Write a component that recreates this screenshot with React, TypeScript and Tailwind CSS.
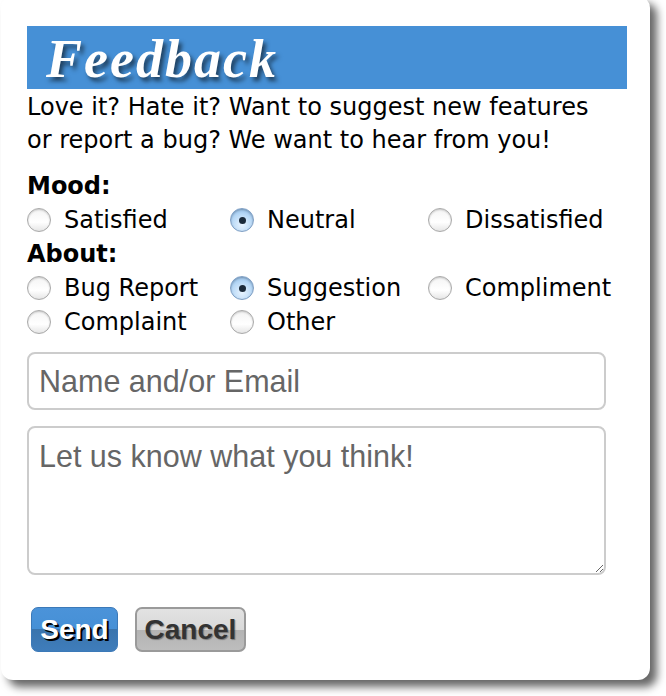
import React from 'react';

type Option = { label: string; checked?: boolean };

const moods: Option[] = [
  { label: 'Satisfied' },
  { label: 'Neutral', checked: true },
  { label: 'Dissatisfied' },
];

const topics: Option[] = [
  { label: 'Bug Report' },
  { label: 'Suggestion', checked: true },
  { label: 'Compliment' },
  { label: 'Complaint' },
  { label: 'Other' },
];

const Radio: React.FC<Option> = ({ label, checked }) => (
  <label className="flex items-center gap-[13px] h-[34px]">
    {checked ? (
      <span className="flex items-center justify-center w-[24px] h-[24px] rounded-full border border-[#7f9fc4] bg-[radial-gradient(circle_at_50%_70%,#e9f4ff_0%,#b7d8f6_55%,#86b4e2_100%)] shadow-[inset_0_1px_2px_rgba(0,0,0,0.25)]">
        <span className="w-[7px] h-[7px] rounded-full bg-[#1b2a3a]" />
      </span>
    ) : (
      <span className="w-[24px] h-[24px] rounded-full border border-[#a9a9a9] bg-[linear-gradient(#f4f4f4,#ffffff_60%,#e6e6e6)] shadow-[inset_0_1px_2px_rgba(0,0,0,0.2)]" />
    )}
    <span>{label}</span>
  </label>
);

const RadioGroup: React.FC<{ options: Option[] }> = ({ options }) => (
  <div className="grid grid-cols-[203px_198px_200px]">
    {options.map((o) => (
      <Radio key={o.label} {...o} />
    ))}
  </div>
);

export default function App() {
  return (
    <div className="w-[666px] h-[696px] bg-white overflow-hidden">
      <div className="ml-[1px] -mt-[4px] w-[649px] h-[684px] bg-white rounded-[12px] shadow-[7px_7px_8px_rgba(0,0,0,0.6)] pt-[30px] pl-[26px] text-black font-['DejaVu_Sans',sans-serif] text-[24px]">
        <div className="w-[600px] h-[63px] bg-[#4690d6] pl-[19px] flex items-center">
          <h1 className="text-white font-['Liberation_Serif',serif] font-bold italic text-[54px] tracking-[2px] leading-none mt-[2px] [text-shadow:3px_4px_4px_rgba(0,0,0,0.55)]">
            Feedback
          </h1>
        </div>
        <p className="w-[580px] leading-[33px] pt-[2px]">
          Love it? Hate it? Want to suggest new features or report a bug? We want to hear from you!
        </p>
        <div className="mt-[12px] leading-[34px] font-bold">Mood:</div>
        <RadioGroup options={moods} />
        <div className="leading-[34px] font-bold">About:</div>
        <RadioGroup options={topics} />
        <div className="mt-[13px] w-[579px] flex flex-col gap-[16px] font-['Liberation_Sans',Arial,sans-serif]">
          <input
            placeholder="Name and/or Email"
            className="h-[58px] border-2 border-[#cccccc] rounded-[8px] px-[10px] text-[30.5px] placeholder:text-[#666666] outline-none"
          />
          <textarea
            placeholder="Let us know what you think!"
            className="h-[149px] border-2 border-[#cccccc] rounded-[8px] px-[10px] pt-[10px] text-[30.5px] leading-[36px] placeholder:text-[#666666] outline-none resize-y"
          />
        </div>
        <div className="mt-[32px] ml-[4px] flex gap-[17px] font-['Liberation_Sans',Arial,sans-serif] font-bold text-[28px]">
          <button className="w-[87px] h-[45px] rounded-[7px] border border-[#3c79b8] bg-[linear-gradient(#4b93d9_0%,#4690d6_50%,#3a74ad_50%,#3f7dbb_100%)] text-white [text-shadow:2px_2px_0_#000] leading-none">
            Send
          </button>
          <button className="w-[111px] h-[45px] rounded-[7px] border-2 border-[#9a9a9a] bg-[linear-gradient(#e2e2e2_0%,#d9d9d9_50%,#b3b3b3_50%,#bdbdbd_100%)] text-[#333333] [text-shadow:1px_1px_1px_rgba(0,0,0,0.35)] leading-none">
            Cancel
          </button>
        </div>
      </div>
    </div>
  );
}
